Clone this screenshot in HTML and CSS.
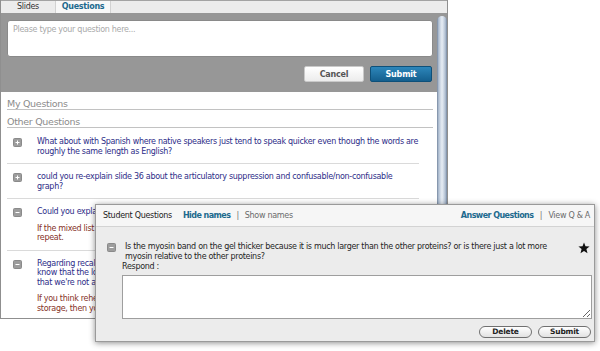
FILE: index.html
```html
<!DOCTYPE html>
<html>
<head>
<meta charset="utf-8">
<link rel="stylesheet" href="styles.css">
</head>
<body>
<div class="app">
  <div class="tabs">
    <div class="tab">Slides</div>
    <div class="tab active">Questions</div>
  </div>
  <div class="content">
    <div class="main">
      <div class="compose">
        <textarea class="ask" placeholder="Please type your question here..."></textarea>
        <div class="actions">
          <button class="btn cancel">Cancel</button>
          <button class="btn submit">Submit</button>
        </div>
      </div>
      <div class="lists">
        <h3 class="section">My Questions</h3>
        <h3 class="section">Other Questions</h3>
        <ul class="qlist">
          <li class="q">
            <svg class="toggle" viewBox="0 0 9 9"><rect x="0.5" y="0.5" width="8" height="8" rx="1" fill="#9d9d9d" stroke="#8a8a8a"/><path d="M2.5 4.5h4M4.5 2.5v4" stroke="#fff" stroke-width="1"/></svg>
            <div class="qbody"><p class="qtext">What about with Spanish where native speakers just tend to speak quicker even though the words are roughly the same length as English?</p></div>
          </li>
          <li class="q">
            <svg class="toggle" viewBox="0 0 9 9"><rect x="0.5" y="0.5" width="8" height="8" rx="1" fill="#9d9d9d" stroke="#8a8a8a"/><path d="M2.5 4.5h4M4.5 2.5v4" stroke="#fff" stroke-width="1"/></svg>
            <div class="qbody"><p class="qtext">could you re-explain slide 36 about the articulatory suppression and confusable/non-confusable graph?</p></div>
          </li>
          <li class="q">
            <svg class="toggle" viewBox="0 0 9 9"><rect x="0.5" y="0.5" width="8" height="8" rx="1" fill="#9d9d9d" stroke="#8a8a8a"/><path d="M2.5 4.5h4" stroke="#fff" stroke-width="1"/></svg>
            <div class="qbody"><p class="qtext">Could you explain the mixed list effect again?</p><p class="atext">If the mixed list has both kinds of items, the confusable ones are harder to recall on each<br>repeat.</p></div>
          </li>
          <li class="q">
            <svg class="toggle" viewBox="0 0 9 9"><rect x="0.5" y="0.5" width="8" height="8" rx="1" fill="#9d9d9d" stroke="#8a8a8a"/><path d="M2.5 4.5h4" stroke="#fff" stroke-width="1"/></svg>
            <div class="qbody"><p class="qtext">Regarding recall of the word lists, how do we actually tell which items were rehearsed? Do we<br>know that the loop is really phonological, or is it possible that rehearsal works in some way<br>that we're not aware of?</p><p class="atext">If you think rehearsal is just a way of refreshing the items that are held in the long-term<br>storage, then you would expect the same pattern for every list.</p></div>
          </li>
        </ul>
      </div>
    </div>
    <div class="scroll"><div class="thumb"></div></div>
  </div>
</div>

<div class="overlay">
  <div class="ohead">
    <span class="otitle">Student Questions</span>
    <a class="link strong">Hide names</a>
    <span class="pipe">|</span>
    <a class="link">Show names</a>
    <span class="oright">
      <a class="link strong">Answer Questions</a>
      <span class="pipe">|</span>
      <a class="link">View Q &amp; A</a>
    </span>
  </div>
  <div class="obody">
    <div class="orow">
      <svg class="toggle" viewBox="0 0 9 9"><rect x="0.5" y="0.5" width="8" height="8" rx="1" fill="#9d9d9d" stroke="#8a8a8a"/><path d="M2.5 4.5h4" stroke="#fff" stroke-width="1"/></svg>
      <p class="otext">Is the myosin band on the gel thicker because it is much larger than the other proteins? or is there just a lot more myosin relative to the other proteins?</p>
      <svg class="star" viewBox="0 0 12 12"><polygon points="6,0.5 7.5,4.3 11.6,4.5 8.4,7.1 9.5,11.2 6,8.9 2.5,11.2 3.6,7.1 0.4,4.5 4.5,4.3" fill="#111"/></svg>
    </div>
    <div class="respond">Respond :</div>
    <textarea class="reply"></textarea>
    <div class="obuttons">
      <button class="pill">Delete</button>
      <button class="pill">Submit</button>
    </div>
  </div>
</div>
</body>
</html>
```

FILE: styles.css
```css
body {
  margin: 0;
  background: #fff;
  font-family: "DejaVu Sans", sans-serif;
  font-size: 8px;
  letter-spacing: -0.3px;
  position: relative;
  width: 600px;
  height: 351px;
  overflow: hidden;
}

.app {
  width: 448px;
  height: 319px;
  box-sizing: border-box;
  border: 1px solid #8f8f8f;
  border-top: none;
  display: flex;
  flex-direction: column;
  overflow: hidden;
}

.tabs {
  height: 13px;
  box-sizing: border-box;
  border-top: 1px solid #a3a3a3;
  background: #ececec;
  display: flex;
}
.tab {
  width: 54px;
  text-align: center;
  line-height: 12px;
  color: #333;
}
.tab.active {
  background: #f8f8f8;
  color: #1d6a8e;
  font-weight: bold;
  border-left: 1px solid #d2d2d2;
  border-right: 1px solid #d2d2d2;
}

.content {
  flex: 1;
  display: flex;
  min-height: 0;
}
.main {
  flex: 1;
  display: flex;
  flex-direction: column;
  min-width: 0;
}

.compose {
  background: #979797;
  height: 79px;
  box-sizing: border-box;
  padding: 7px 4px 10px 6px;
  display: flex;
  flex-direction: column;
}
.ask {
  height: 37px;
  box-sizing: border-box;
  border: 1px solid #8a8a8a;
  border-radius: 3px;
  background: #fff;
  resize: none;
  padding: 4px 5px;
  margin: 0;
  font-family: "DejaVu Sans", sans-serif;
  font-size: 8px;
  letter-spacing: -0.3px;
  outline: none;
}
.ask::placeholder {
  color: #a9a9a9;
}
.actions {
  margin-top: 9px;
  display: flex;
  justify-content: flex-end;
  gap: 6px;
  padding-right: 1px;
}
.btn {
  height: 16px;
  padding: 0;
  border-radius: 2px;
  font-family: "DejaVu Sans", sans-serif;
  font-size: 8px;
  letter-spacing: -0.2px;
  font-weight: bold;
}
.cancel {
  width: 60px;
  color: #555;
  border: 1px solid #c9c9c9;
  background: linear-gradient(#ffffff, #ececec);
}
.submit {
  width: 62px;
  color: #fff;
  border: 1px solid #0e5079;
  background: linear-gradient(#2d86ba, #145f8e);
}

.lists {
  flex: 1;
  padding: 0 4px 0 6px;
  overflow: hidden;
}
.section {
  margin: 0;
  padding-top: 6px;
  font-size: 9.5px;
  line-height: 11px;
  font-weight: normal;
  color: #8b8b8b;
  border-bottom: 1px solid #c2c2c2;
}
.qlist {
  list-style: none;
  margin: 0 14px 0 0;
  padding: 0;
}
.q {
  display: flex;
  align-items: flex-start;
  padding: 8px 0 7px 6px;
  border-bottom: 1px solid #dadada;
}
.q:first-child {
  padding-top: 9px;
}
.toggle {
  width: 9px;
  height: 9px;
  flex: none;
  margin-top: 1px;
}
.qbody {
  flex: 1;
  margin-left: 15px;
}
.qtext, .atext {
  margin: 0;
  line-height: 9.5px;
}
.qtext {
  color: #2d2d88;
}
.atext {
  margin-top: 7px;
  color: #86321f;
}

.scroll {
  width: 10px;
  background: #979797;
  padding-top: 3px;
  box-sizing: border-box;
  display: flex;
}
.thumb {
  flex: 1;
  border-radius: 5px 5px 0 0;
  background: linear-gradient(90deg, #6f7f96 0, #9fb0c6 1px, #c9d4e2 3px, #e7edf4 5px, #c9d4e2 7px, #9fb0c6 9px, #6f7f96 10px);
}

.overlay {
  position: absolute;
  left: 95px;
  top: 204px;
  width: 500px;
  height: 138px;
  box-sizing: border-box;
  border: 1px solid #9a9a9a;
  background: #ececec;
  box-shadow: 0 1px 6px rgba(0, 0, 0, 0.45);
  display: flex;
  flex-direction: column;
}
.ohead {
  height: 22px;
  box-sizing: border-box;
  background: #f6f6f6;
  border-bottom: 1px solid #d3d3d3;
  display: flex;
  align-items: center;
  padding: 0 4px 0 7px;
  color: #222;
}
.otitle {
  margin-right: 11px;
}
.link {
  color: #6a6a6a;
}
.link.strong {
  color: #1d6a8e;
  font-weight: bold;
  letter-spacing: -0.55px;
}
.pipe {
  color: #777;
  margin: 0 6px;
}
.oright {
  margin-left: auto;
}
.oright .pipe {
  margin: 0 4px;
}

.obody {
  flex: 1;
  padding: 15px 2px 3px 11px;
  display: flex;
  flex-direction: column;
}
.orow {
  display: flex;
  align-items: flex-start;
}
.otext {
  flex: 1;
  margin: 0 0 0 9px;
  line-height: 10px;
  color: #1e1e1e;
  padding-right: 20px;
}
.star {
  width: 12px;
  height: 12px;
  flex: none;
  margin-right: 2px;
}
.respond {
  margin-left: 15px;
  line-height: 10px;
  color: #1e1e1e;
}
.reply {
  margin: 3px 0 0 15px;
  height: 44px;
  box-sizing: border-box;
  border: 1px solid #9e9e9e;
  background: #fff;
  font-family: "DejaVu Sans", sans-serif;
  font-size: 8px;
  resize: both;
  outline: none;
}
.obuttons {
  margin-top: 7px;
  display: flex;
  justify-content: flex-end;
  gap: 6px;
  padding-right: 1px;
}
.pill {
  width: 53px;
  height: 12px;
  padding: 0;
  border: 1px solid #707070;
  border-radius: 7px;
  background: linear-gradient(#ffffff, #e2e2e2);
  font-family: "DejaVu Sans", sans-serif;
  font-size: 7.5px;
  letter-spacing: -0.2px;
  font-weight: bold;
  color: #222;
  line-height: 10px;
}
```
